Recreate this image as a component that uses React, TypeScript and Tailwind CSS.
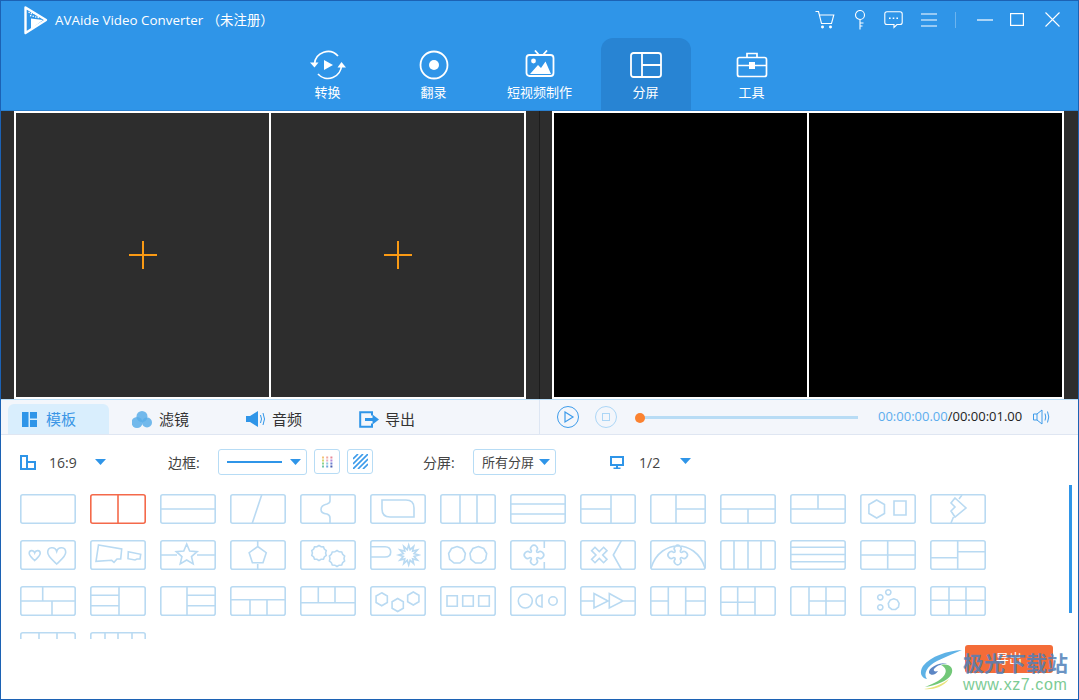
import React from "react";

const FONT = "font-['Open_Sans','Noto_Sans_CJK_SC',sans-serif]";

const f = (n: number) => n.toFixed(2);
const poly = (cx: number, cy: number, r: number, n: number, rot = -90) => {
  const p: string[] = [];
  for (let i = 0; i < n; i++) {
    const a = ((rot + (i * 360) / n) * Math.PI) / 180;
    p.push(`${f(cx + r * Math.cos(a))} ${f(cy + r * Math.sin(a))}`);
  }
  return "M" + p.join("L") + "Z";
};
const star = (cx: number, cy: number, R: number, r: number, n: number, rot = -90) => {
  const p: string[] = [];
  for (let i = 0; i < n * 2; i++) {
    const a = ((rot + (i * 180) / n) * Math.PI) / 180;
    const q = i % 2 ? r : R;
    p.push(`${f(cx + q * Math.cos(a))} ${f(cy + q * Math.sin(a))}`);
  }
  return "M" + p.join("L") + "Z";
};
const circ = (x: number, y: number, r: number) => `M${x - r} ${y}a${r} ${r} 0 1 0 ${2 * r} 0a${r} ${r} 0 1 0 ${-2 * r} 0`;
const heart = (x: number, y: number, s: number) =>
  `M${x} ${y + 0.5 * s}C${x - 0.2 * s} ${y + 0.3 * s} ${x - 0.5 * s} ${y + 0.1 * s} ${x - 0.5 * s} ${y - 0.15 * s}C${x - 0.5 * s} ${y - 0.45 * s} ${x - 0.1 * s} ${y - 0.5 * s} ${x} ${y - 0.2 * s}C${x + 0.1 * s} ${y - 0.5 * s} ${x + 0.5 * s} ${y - 0.45 * s} ${x + 0.5 * s} ${y - 0.15 * s}C${x + 0.5 * s} ${y + 0.1 * s} ${x + 0.2 * s} ${y + 0.3 * s} ${x} ${y + 0.5 * s}Z`;
const blob = (x: number, y: number) =>
  `M${x - 2.5} ${y - 4}A3.4 3.4 0 1 1 ${x + 2.5} ${y - 4}Q${x + 2.5} ${y - 2.5} ${x + 4} ${y - 2.5}A3.4 3.4 0 1 1 ${x + 4} ${y + 2.5}Q${x + 2.5} ${y + 2.5} ${x + 2.5} ${y + 4}A3.4 3.4 0 1 1 ${x - 2.5} ${y + 4}Q${x - 2.5} ${y + 2.5} ${x - 4} ${y + 2.5}A3.4 3.4 0 1 1 ${x - 4} ${y - 2.5}Q${x - 2.5} ${y - 2.5} ${x - 2.5} ${y - 4}Z`;
const cross = (x: number, y: number) => {
  const pts = [[-2.4, -8.5], [2.4, -8.5], [2.4, -2.4], [8.5, -2.4], [8.5, 2.4], [2.4, 2.4], [2.4, 8.5], [-2.4, 8.5], [-2.4, 2.4], [-8.5, 2.4], [-8.5, -2.4], [-2.4, -2.4]];
  const k = Math.SQRT1_2;
  return "M" + pts.map(([a, b]) => `${f(x + k * (a - b))} ${f(y + k * (a + b))}`).join("L") + "Z";
};

const thumbs: string[] = [
  "",
  "M28 0V30",
  "M0 15H56",
  "M32 0L22 30",
  "M30 0V7Q30 9 27 10C19 12 19 19 27 20Q30 21 30 24V30",
  "M12 6H36Q44 6 44 14V23H20Q12 23 12 15Z",
  "M20 0V30M37 0V30",
  "M0 10H56M0 20H56",
  "M31 0V30M0 15H31",
  "M26 0V30M26 15H56",
  "M0 15H56M28 15V30",
  "M0 15H56M28 0V15",
  poly(16.7, 15, 9, 6) + "M34 7H46V21H34Z",
  "M32 1L29 5M25 4L36 14L25 23L21 17L25 13L21 9ZM23.5 23L21 29",

  heart(14.7, 15, 11) + heart(36.7, 15, 18),
  "M8.5 5L31.7 9L30.7 19H27L24 22.3L21.7 20.3L6 21.3ZM38.3 11.7L50.7 14.3L50 19H47L45 20L38 18.7Z",
  star(26.7, 15, 11, 5, 5) + "M0 15H17M37 15H56",
  poly(27.7, 15.5, 9, 5) + "M27.7 0V6.5M27.7 24V30",
  star(19, 13, 7.6, 6.6, 10) + star(37, 18.5, 8, 7, 10),
  "M0 6.7H15Q20.7 6.7 20.7 12Q20.7 17 15 17H0" + star(38.7, 15, 10, 5.5, 12),
  poly(17, 15, 8.5, 9) + poly(38.3, 15, 8.5, 9),
  blob(24, 15) + "M34.3 0V8M34.3 22V30",
  cross(19.3, 15) + "M41.7 0L33.3 15L41.7 30",
  "M1 28C6 12 18 6 28 6C38 6 50 12 55 28" + blob(27.7, 15),
  "M14 0V30M28 0V30M41 0V30",
  "M0 7.3H56M0 14.5H56M0 21.7H56",
  "M27.7 0V30M0 15H56",
  "M27.7 0V30M0 17.7H27.7M27.7 11.7H56",

  "M0 15H56M22.7 0V15M32 15V30",
  "M29 0V30M0 9.3H29M0 19.7H29",
  "M27 0V30M27 9.3H56M27 19.7H56",
  "M0 13.7H56M20 13.7V30M37 13.7V30",
  "M0 16.7H56M18.3 0V16.7M35 0V16.7",
  poly(11.7, 13.3, 6.5, 6) + poly(27.7, 19, 6.5, 6) + poly(43.3, 12.5, 6.5, 6),
  "M7 9.7H17.3V20.3H7ZM22.7 9.7H33.3V20.3H22.7ZM38.7 9.7H49.3V20.3H38.7Z",
  circ(15.3, 15, 7) + "M32 9V21Q26 20 26 15Q26 10 32 9Z" + circ(43, 15, 4.2),
  "M0 15H14M14 7.5L28 15L14 22ZM29.3 7.5L43 15L29.3 22ZM43 15H56",
  "M18.3 0V30M35.7 0V30M0 15H18.3M35.7 15H56",
  "M17.7 0V30M35 0V30M0 16.3H35",
  "M19 0V30M36 0V30M19 15H56",
  circ(28.3, 6.3, 2.6) + circ(20.3, 11.3, 2.6) + circ(20.3, 21.3, 2.6) + poly(33.7, 18.3, 5.5, 9),
  "M19 0V30M36 0V30M0 14.3H56",

  "M19 0V30M37 0V30",
  "M15 0V30M28 0V30M42 0V30",
];

function Thumb({ d, active }: { d: string; active?: boolean }) {
  const c = active ? "#f4694a" : "#b9daf2";
  return (
    <svg width="56" height="30" viewBox="0 0 56 30" fill="none" stroke={c} strokeWidth="1.6">
      <rect x="0.8" y="0.8" width="54.4" height="28.4" rx="2" />
      <path d={d} />
    </svg>
  );
}

function Caret({ className = "" }: { className?: string }) {
  return (
    <svg width="11" height="6" viewBox="0 0 11 6" className={className}>
      <path d="M0 0H11L5.5 6Z" fill="#2f95e8" />
    </svg>
  );
}

const white = { fill: "none", stroke: "#fff" } as const;

const navs: { label: string; icon: React.ReactNode; active?: boolean }[] = [
  {
    label: "转换",
    icon: (
      <svg width="38" height="32" viewBox="0 0 38 32" {...white} strokeWidth="1.7">
        <path d="M5.5 15A13.5 13.5 0 0 1 29 7" />
        <path d="M32.5 16A13.5 13.5 0 0 1 9 25" />
        <path d="M1 13.5H9.5L5.5 18.5Z" fill="#fff" stroke="none" />
        <path d="M28.5 18.5H37L32.5 13Z" fill="#fff" stroke="none" />
        <path d="M15 11L24 16L15 21Z" fill="#fff" stroke="none" />
      </svg>
    ),
  },
  {
    label: "翻录",
    icon: (
      <svg width="32" height="32" viewBox="0 0 32 32" {...white} strokeWidth="1.8">
        <circle cx="16" cy="16" r="13.5" />
        <circle cx="16" cy="16" r="5" fill="#fff" stroke="none" />
      </svg>
    ),
  },
  {
    label: "短视频制作",
    icon: (
      <svg width="30" height="30" viewBox="0 0 30 30" {...white} strokeWidth="1.8">
        <path d="M10 0.5L14 5M22 0.5L18 5" />
        <rect x="1.5" y="5" width="27" height="21" rx="3" />
        <circle cx="8.5" cy="11" r="2.4" fill="#fff" stroke="none" />
        <path d="M5 24L13 15L16 18L20.5 11.5L26 24Z" fill="#fff" stroke="none" />
      </svg>
    ),
  },
  {
    label: "分屏",
    active: true,
    icon: (
      <svg width="32" height="26" viewBox="0 0 32 26" {...white} strokeWidth="1.8">
        <rect x="1" y="1" width="30" height="24" rx="2.5" />
        <path d="M12 1V25M12 13H31" />
      </svg>
    ),
  },
  {
    label: "工具",
    icon: (
      <svg width="32" height="26" viewBox="0 0 32 26" {...white} strokeWidth="1.7">
        <rect x="1.5" y="5.5" width="29" height="19" rx="2" />
        <path d="M11 5.5V1.5H21V5.5M1.5 13.5H30.5" />
        <rect x="13" y="10" width="6" height="7" fill="#fff" stroke="none" />
      </svg>
    ),
  },
];

function Pane({ dark }: { dark?: boolean }) {
  const cell = dark
    ? "flex items-center justify-center bg-[#2d2d2d]"
    : "flex items-center justify-center bg-black";
  return (
    <div className="grid h-full w-[512px] grid-cols-2 gap-[2px] border-2 border-b-[2px] border-white bg-white">
      {[0, 1].map((i) => (
        <div key={i} className={cell}>
          {dark && (
            <svg width="28" height="28" viewBox="0 0 28 28" stroke="#fa9a14" strokeWidth="2" className="mt-[-1px]">
              <path d="M14 0V28M0 14H28" />
            </svg>
          )}
        </div>
      ))}
    </div>
  );
}

export default function App() {
  return (
    <div className={`${FONT} relative flex h-[700px] w-[1079px] flex-col overflow-hidden border border-[#1c62b4] bg-white`}>
      {/* Header */}
      <header className="h-[110px] shrink-0 border-b border-[#2a80cf] bg-[#2f95e8]">
        <div className="flex h-[37px] items-center pl-[23px] pr-[18px]">
          <svg width="24" height="29" viewBox="0 0 24 29" className="mr-[7px] mt-[1px]">
            <path d="M1.5 1.5L22 14L1.5 27Z" fill="none" stroke="#fff" strokeWidth="2.4" strokeLinejoin="round" />
            <path d="M7 12.5L19 14L7 23Z" fill="#fff" />
            <path d="M4.5 6L8 8M7 5.5L15 10.5M6 9.5L16 12" stroke="#fff" strokeWidth="1.3" strokeDasharray="1.4 1.2" fill="none" />
          </svg>
          <span className="pt-[1px] text-[13.4px] text-white">AVAide Video Converter （未注册）</span>
          <div className="ml-auto flex items-center">
            <svg width="20" height="18" viewBox="0 0 20 18" fill="none" stroke="#fff" strokeWidth="1.1">
              <path d="M0.5 0.5H3.5L6.5 12.5H16.5L18.8 4H4.5" />
              <circle cx="7.5" cy="16" r="0.9" fill="#fff" />
              <circle cx="15.5" cy="16" r="0.9" fill="#fff" />
            </svg>
            <svg width="12" height="20" viewBox="0 0 12 20" fill="none" stroke="#fff" strokeWidth="1.1" className="ml-[19px]">
              <circle cx="6" cy="5" r="4.5" />
              <path d="M6 9.5V19.5M6 13H9.5M6 16H8.5" />
            </svg>
            <svg width="19" height="18" viewBox="0 0 19 18" fill="none" stroke="#fff" strokeWidth="1.1" className="ml-[18px]">
              <path d="M3 0.8H16Q18.2 0.8 18.2 3V11.5Q18.2 13.5 16 13.5H13L10 16.5V13.5H3Q0.8 13.5 0.8 11.5V3Q0.8 0.8 3 0.8Z" />
              <path d="M5 7.2H6.6M8.7 7.2H10.3M12.4 7.2H14" strokeWidth="1.6" />
            </svg>
            <svg width="16" height="14" viewBox="0 0 16 14" stroke="#fff" strokeWidth="1.1" className="ml-[18px]">
              <path d="M0 1H16M0 7H16M0 13H16" />
            </svg>
            <div className="ml-[18px] h-[16px] w-px bg-[#6cb4ef]" />
            <svg width="16" height="2" viewBox="0 0 16 2" stroke="#fff" strokeWidth="1.2" className="ml-[21px]">
              <path d="M0 1H16" />
            </svg>
            <svg width="14" height="13" viewBox="0 0 14 13" fill="none" stroke="#fff" strokeWidth="1.2" className="ml-[17px]">
              <rect x="0.6" y="0.6" width="12.8" height="11.8" />
            </svg>
            <svg width="15" height="15" viewBox="0 0 15 15" stroke="#fff" strokeWidth="1.1" className="ml-[21px]">
              <path d="M0.5 0.5L14.5 14.5M14.5 0.5L0.5 14.5" />
            </svg>
          </div>
        </div>
        <nav className="flex h-[72px] justify-center gap-4">
          {navs.map((n) => (
            <div
              key={n.label}
              className={`flex h-[72px] w-[90px] flex-col items-center rounded-t-xl ${n.active ? "bg-[#2884d3]" : ""}`}
            >
              <div className="flex h-[44px] items-center justify-center pt-[10px]">{n.icon}</div>
              <span className="mt-[1px] whitespace-nowrap text-[13px] leading-[18px] text-white">{n.label}</span>
            </div>
          ))}
        </nav>
      </header>

      {/* Preview */}
      <section className="flex h-[288px] shrink-0 bg-[#2d2d2d]">
        <div className="flex w-[538px] pl-[13px]">
          <Pane dark />
        </div>
        <div className="w-px bg-[#1c1c1c]" />
        <div className="flex flex-1 pl-[12px]">
          <Pane />
        </div>
      </section>

      {/* Tabs / transport */}
      <section className="flex h-[36px] shrink-0 border-y border-t-[#b7dcf6] border-b-[#dfe6f2] bg-[#f3f6fb]">
        <div className="flex w-[538px] items-end pl-[7px]">
          <div className="flex h-[30px] w-[101px] items-center rounded-t-md bg-[#d9eefd] pl-[14px] text-[15px] text-[#3b96e6]">
            <svg width="15" height="15" viewBox="0 0 15 15" fill="#2f95e8" className="mr-[9px]">
              <rect width="6.5" height="15" />
              <rect x="8" width="7" height="6.5" />
              <rect x="8" y="8" width="7" height="7" />
            </svg>
            模板
          </div>
          <div className="ml-[23px] flex h-[30px] items-center text-[15px] text-[#333]">
            <svg width="20" height="17" viewBox="0 0 20 17" fill="#5aaee9" fillOpacity="0.85" className="mr-[7px]">
              <circle cx="10" cy="5.5" r="5.5" />
              <circle cx="5" cy="11.5" r="5.5" />
              <circle cx="15" cy="11.5" r="5" />
            </svg>
            滤镜
          </div>
          <div className="ml-[57px] flex h-[30px] items-center text-[15px] text-[#333]">
            <svg width="20" height="16" viewBox="0 0 20 16" fill="none" className="mr-[6px]">
              <path d="M0 5H4L12 0V16L4 11H0Z" fill="#2f95e8" />
              <path d="M14.5 4Q16.5 8 14.5 12M17 2Q20 8 17 14" stroke="#2f95e8" strokeWidth="1" />
            </svg>
            音频
          </div>
          <div className="ml-[57px] flex h-[30px] items-center text-[15px] text-[#333]">
            <svg width="20" height="17" viewBox="0 0 20 17" fill="none" className="mr-[6px]">
              <path d="M13 4.5V1.2H1.2V15.8H13V12.5" stroke="#2f95e8" strokeWidth="2" />
              <path d="M6 7H13.5V3.5L20 8.5L13.5 13.5V10H6Z" fill="#2f95e8" />
            </svg>
            导出
          </div>
        </div>
        <div className="w-px bg-[#dde6f3]" />
        <div className="flex flex-1 items-center pl-[17px]">
          <svg width="22" height="22" viewBox="0 0 22 22" fill="none" stroke="#3d9bea" strokeWidth="1">
            <circle cx="11" cy="11" r="10.5" />
            <path d="M8 6L16 11L8 16Z" strokeWidth="1.2" />
          </svg>
          <svg width="22" height="22" viewBox="0 0 22 22" fill="none" stroke="#acd6f6" strokeWidth="1" className="ml-[16px]">
            <circle cx="11" cy="11" r="10.5" />
            <rect x="7.5" y="7.5" width="7" height="7" />
          </svg>
          <div className="relative ml-[23px] h-[3px] w-[218px] bg-[#b8dcf5]">
            <div className="absolute left-[-5px] top-[-3px] h-[10px] w-[10px] rounded-full bg-[#fb8230]" />
          </div>
          <span className="ml-[20px] whitespace-nowrap text-[13px] text-[#222]">
            <span className="text-[#5cadee]">00:00:00.00</span>/00:00:01.00
          </span>
          <svg width="18" height="18" viewBox="0 0 18 18" fill="none" stroke="#3d9bea" strokeWidth="1" className="ml-[11px]">
            <path d="M0.5 6H4V12H0.5ZM4 6L9 2V16L4 12" />
            <path d="M12 5.5Q13.5 9 12 12.5M14.5 3.5Q17 9 14.5 14.5" />
          </svg>
        </div>
      </section>

      {/* Toolbar */}
      <div className="flex h-[59px] shrink-0 items-start pl-[19px] pt-[14px] text-[14px] text-[#444]">
        <div className="flex h-[26px] w-[198px] items-center">
          <svg width="16" height="15" viewBox="0 0 16 15" fill="none" stroke="#2f95e8" strokeWidth="2">
            <path d="M1 1H7V14H1ZM7 7H15V14H7Z" />
          </svg>
          <span className="ml-[13px] w-[46px]">16:9</span>
          <Caret />
          <span className="ml-[62px] whitespace-nowrap">边框:</span>
        </div>
        <div className="flex h-[26px] w-[89px] items-center rounded-[3px] border border-[#b7dcf5] pl-[8px]">
          <div className="h-[2px] w-[55px] bg-[#2f95e8]" />
          <Caret className="ml-[8px]" />
        </div>
        <div className="ml-[7px] flex h-[25px] w-[26px] items-center justify-center rounded-[3px] border border-[#b7dcf5]">
          <svg width="12" height="12" viewBox="0 0 12 12">
            {[
              ["#f3c37a", "#f2a8a0", "#e88a9a"],
              ["#d6d96f", "#e8b0c0", "#b48ad8"],
              ["#8fd48c", "#8cc8e0", "#6f7fd0"],
              ["#6fc8a8", "#6fa8e0", "#4a5fb0"],
            ].flatMap((row, r) =>
              row.map((c, i) => <rect key={`${r}${i}`} x={i * 4.2 + 1} y={r * 3 + 0.5} width="2" height="2" fill={c} />),
            )}
          </svg>
        </div>
        <div className="ml-[7px] flex h-[25px] w-[26px] items-center justify-center rounded-[3px] border border-[#b7dcf5]">
          <svg width="15" height="15" viewBox="0 0 15 15" stroke="#3d9bea" strokeWidth="1.7">
            <path d="M0 5L5 0M0 10L10 0M0 15L15 0M5 15L15 5M10 15L15 10" />
          </svg>
        </div>
        <span className="ml-[50px] flex h-[26px] w-[50px] items-center whitespace-nowrap">分屏:</span>
        <div className="flex h-[26px] w-[83px] items-center rounded-[3px] border border-[#b7dcf5] pl-[8px]">
          <span className="whitespace-nowrap text-[13px] leading-none">所有分屏</span>
          <Caret className="ml-[5px]" />
        </div>
        <div className="ml-[54px] flex h-[26px] items-center">
          <svg width="14" height="13" viewBox="0 0 14 13" fill="none">
            <rect x="1" y="1" width="12" height="8" stroke="#2f95e8" strokeWidth="2" />
            <path d="M6 10H8V11.5H10.5V13H3.5V11.5H6Z" fill="#2f95e8" />
          </svg>
          <span className="ml-[15px] w-[41px]">1/2</span>
          <Caret className="mb-[3px]" />
        </div>
      </div>

      {/* Template grid */}
      <div className="relative flex-1 pl-[19px]">
        <div className="grid h-[145px] w-[1000px] grid-cols-[repeat(14,56px)] content-start gap-x-[14px] gap-y-[16px] overflow-hidden">
          {thumbs.map((d, i) => (
            <Thumb key={i} d={d} active={i === 1} />
          ))}
        </div>
        <div className="absolute right-[6px] top-[-9px] h-[128px] w-[3px] bg-[#2f95e8]" />
        <div className="absolute left-[964px] top-[151px] flex h-[28px] w-[88px] items-center justify-center rounded-[3px] bg-[#f46c38] text-[13px] text-white">
          导出
        </div>
      </div>

      {/* Watermark overlay */}
      <div className="pointer-events-none absolute left-[918px] top-[647px] flex">
        <svg width="44" height="42" viewBox="0 0 44 42" fill="none">
          <path d="M43 2C28 3 12 8 4 18C0 24 2 30 8 31C4 26 8 18 18 13C26 9 34 6 43 2Z" fill="#5eb2e6" />
          <path d="M28 15C18 15 9 20 10 25C12 28 17 27 19 23C16 24 14 23 15 21C18 17 24 16 28 15Z" fill="#5c86c4" />
          <path d="M22 17C30 15 36 20 32 27C28 33 18 37 6 39C16 35 24 31 26 26C28 22 26 19 22 17Z" fill="#72c878" />
          <path d="M30 31C24 36 14 40 5 41C12 42 24 40 30 31Z" fill="#e8e27a" />
        </svg>
        <div className="flex flex-col">
          <span className="whitespace-nowrap font-['Noto_Sans_CJK_SC',sans-serif] text-[21px] font-bold leading-[28px] text-[#4f7fb8]/85">
            极光下载站
          </span>
          <span className="whitespace-nowrap pt-[1px] font-['Liberation_Sans',sans-serif] text-[16px] leading-[16px] tracking-[0.6px] text-[#7ccb95]">
            www.xz7.com
          </span>
        </div>
      </div>
    </div>
  );
}
